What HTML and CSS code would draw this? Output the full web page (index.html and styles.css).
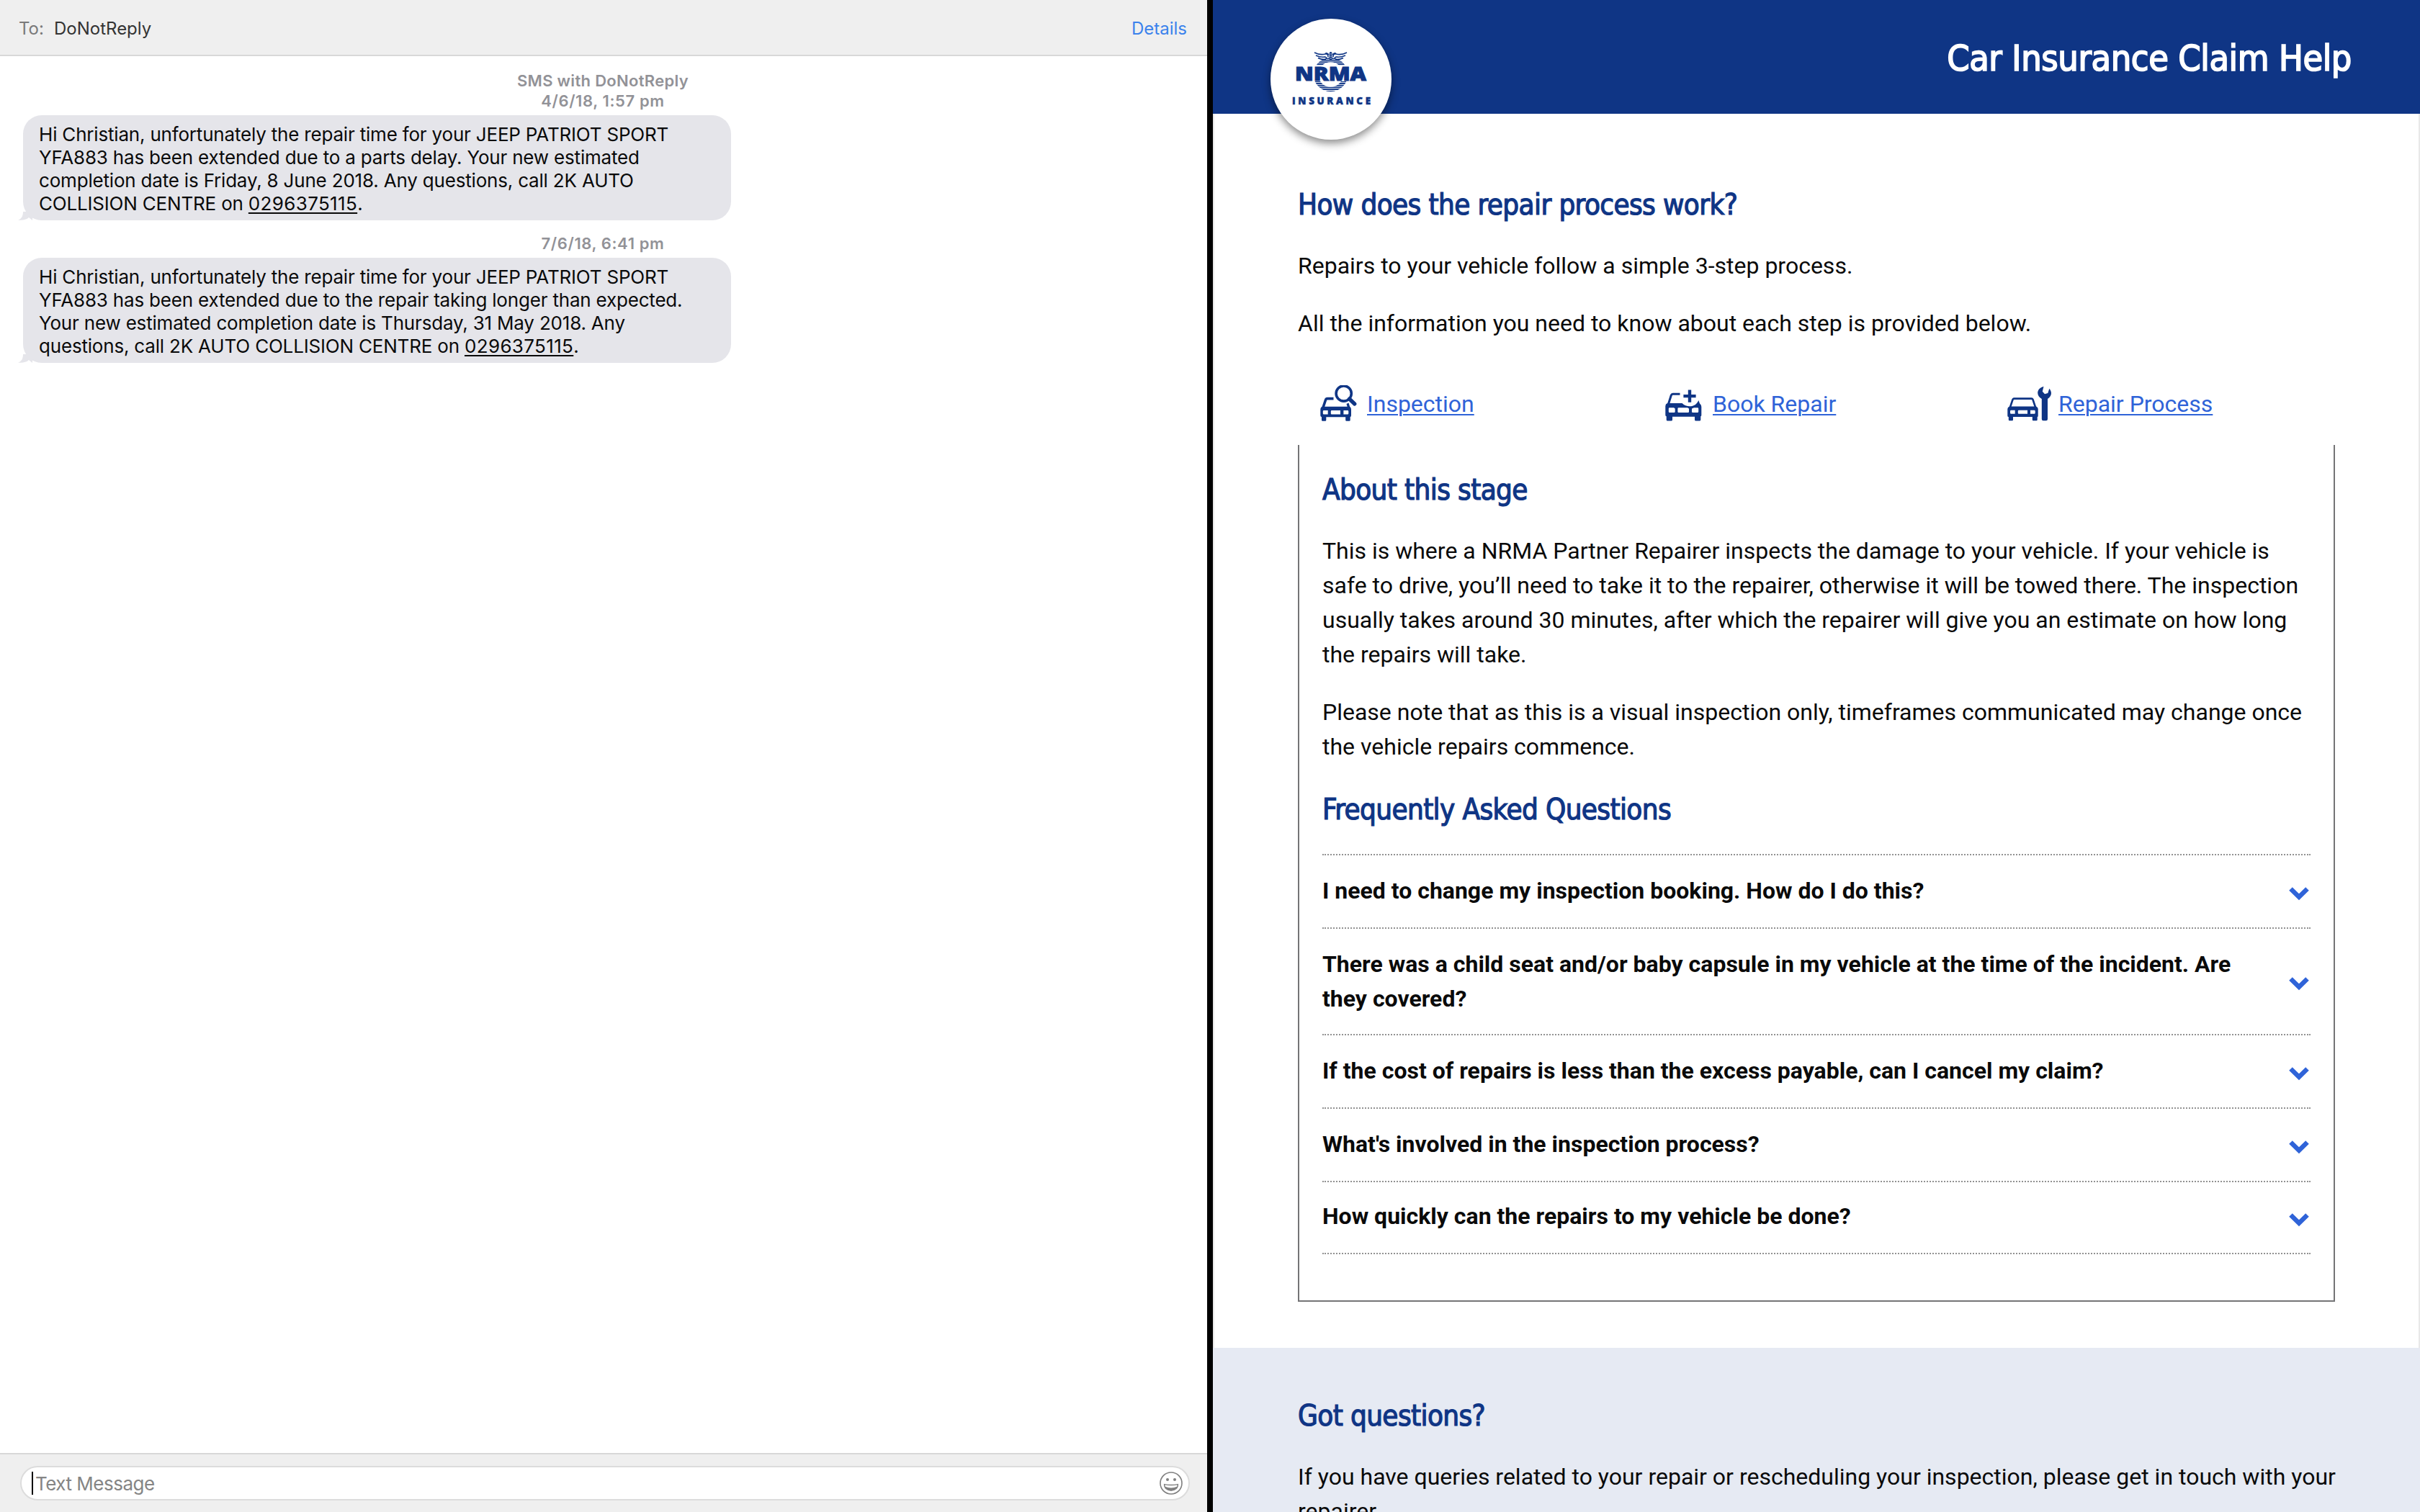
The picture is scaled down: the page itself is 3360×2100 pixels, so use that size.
FILE: index.html
```
<!DOCTYPE html>
<html lang="en">
<head>
<meta charset="utf-8">
<title>Car Insurance Claim Help</title>
<link rel="stylesheet" href="styles.css">
</head>
<body>
<div class="screen">
  <section class="messages">
    <header class="messages-header">
      <span class="to-label">To:</span>
      <span class="recipient">DoNotReply</span>
      <a class="details">Details</a>
    </header>
    <div class="thread">
      <div class="stamp first">SMS with DoNotReply<br><span class="time">4/6/18, 1:57 pm</span></div>
      <div class="bubble">Hi Christian, unfortunately the repair time for your JEEP PATRIOT SPORT<br>YFA883 has been extended due to a parts delay. Your new estimated<br>completion date is Friday, 8 June 2018. Any questions, call 2K AUTO<br>COLLISION CENTRE on <u>0296375115</u>.
        <svg class="tail" width="20" height="12" viewBox="0 0 20 12"><path d="M7 0C7 6 5 10 0 11.6C6 12.4 12 11 15 8L20 12V0Z"/></svg>
      </div>
      <div class="stamp second"><span class="time">7/6/18, 6:41 pm</span></div>
      <div class="bubble">Hi Christian, unfortunately the repair time for your JEEP PATRIOT SPORT<br>YFA883 has been extended due to the repair taking longer than expected.<br>Your new estimated completion date is Thursday, 31 May 2018. Any<br>questions, call 2K AUTO COLLISION CENTRE on <u>0296375115</u>.
        <svg class="tail" width="20" height="12" viewBox="0 0 20 12"><path d="M7 0C7 6 5 10 0 11.6C6 12.4 12 11 15 8L20 12V0Z"/></svg>
      </div>
    </div>
    <footer class="composer">
      <div class="field">
        <span class="caret"></span>
        <span class="placeholder">Text Message</span>
        <svg class="emoji" width="32" height="32" viewBox="0 0 32 32">
          <circle cx="16" cy="16" r="15" fill="none" stroke="#7f7f7f" stroke-width="1.6"/>
          <circle cx="11" cy="11" r="2" fill="#7f7f7f"/><circle cx="21" cy="11" r="2" fill="#7f7f7f"/>
          <path d="M6.6 17.6Q16 19.4 25.4 17.6C25.6 23 21.5 26 16 26S6.4 23 6.6 17.6Z" fill="none" stroke="#7f7f7f" stroke-width="1.4"/>
          <path d="M7.4 20.5Q16 24.4 24.6 20.5Q22.6 26.4 16 26.4T7.4 20.5Z" fill="#7f7f7f"/>
        </svg>
      </div>
    </footer>
  </section>

  <main class="site">
    <header class="site-header">
      <h1>Car Insurance Claim Help</h1>
      <div class="logo">
        <svg width="168" height="168" viewBox="0 0 168 168">
          <defs>
            <pattern id="stripes" width="4" height="2.7" patternUnits="userSpaceOnUse"><rect width="4" height="1.8" fill="#0f3585"/></pattern>
          </defs>
          <circle cx="83.5" cy="77.5" r="20.5" fill="none" stroke="url(#stripes)" stroke-width="6.5"/>
          <path d="M60 44H107V58L99 59Q91 54 83.500 54T68 59L60 58Z" fill="#fff"/>
          <g fill="none" stroke="#0f3585" stroke-width="1.7">
            <path d="M61 47Q69 51 76 49Q80 48 80 53M63 51Q70 54 75 53Q78 53 78 56M66 54.500Q71 57 77 56.500M76 49Q78 46.500 81 50"/>
            <path d="M106 47Q98 51 91 49Q87 48 87 53M104 51Q97 54 92 53Q89 53 89 56M101 54.500Q96 57 90 56.500M91 49Q89 46.500 86 50"/>
          </g>
          <rect x="81.700" y="46" width="3.800" height="12" rx="1.900" fill="#0f3585"/>
          <path d="M82.500 49H85M82.500 52H85M82.500 55H85" stroke="#fff" stroke-width=".7"/>
          <rect x="33" y="65" width="102" height="22" fill="#fff"/>
          <text class="logo-name" x="34" y="85.600" textLength="99" lengthAdjust="spacingAndGlyphs">NRMA</text>
          <text class="logo-sub" x="30" y="119.300" textLength="109" lengthAdjust="spacing">INSURANCE</text>
        </svg>
      </div>
    </header>

    <div class="content">
      <h2>How does the repair process work?</h2>
      <p>Repairs to your vehicle follow a simple 3-step process.</p>
      <p>All the information you need to know about each step is provided below.</p>

      <nav class="steps">
        <div class="step">
          <span class="icon"><svg width="51" height="50" viewBox="0 0 51 50">
            <circle cx="32.700" cy="11.500" r="10.600" fill="none" stroke="#0f3585" stroke-width="3.600"/>
            <path d="M40.500 19L47.800 26" stroke="#0f3585" stroke-width="5.200" stroke-linecap="round"/>
            <path d="M4 31L7.500 20.500Q8.200 18.600 10 18.600H18.500" fill="none" stroke="#0f3585" stroke-width="3.600"/>
            <path d="M36.500 26L39.500 24.500L41.500 31H38Z" fill="#0f3585"/>
            <path fill-rule="evenodd" fill="#0f3585" d="M3 29.700H40.500Q43 30.500 43 34V42Q43 44 41.700 44V48.500Q41.700 49.800 40.400 49.800H36.500Q35.200 49.800 35.200 48.500V44.300H8.300V48.500Q8.300 49.800 7 49.800H3.200Q2 49.800 2 48.500V44Q.3 44 .3 42V34Q.3 30.500 3 29.700ZM5 35A1.200 1.200 0 0 0 3.800 36.200V39.200A1.200 1.200 0 0 0 5 40.400H10.700V35ZM16 35Q14.800 35 14.800 36.200V39.200Q14.800 40.400 16 40.400H28V35ZM32.400 35V40.400H38Q39.300 40.400 39.300 39.200V36.200Q39.300 35 38 35Z"/>
          </svg></span>
          <a>Inspection</a>
        </div>
        <div class="step">
          <span class="icon"><svg width="51" height="44" viewBox="0 0 51 44">
            <path d="M34 .5V17.700M25.400 9.100H42.600" stroke="#0f3585" stroke-width="4.400"/>
            <path d="M4.500 20L8.300 8Q9 6.200 10.700 6.200H20.500" fill="none" stroke="#0f3585" stroke-width="3"/>
            <path fill-rule="evenodd" fill="#0f3585" d="M3 19H23.500Q28 23.300 34 23.300C40 23.300 44 20.500 46.300 15L48 19.500Q50.300 21 50.300 24V35.500Q50.300 37.300 49.300 37.300V42Q49.300 43.600 47.700 43.600H42.500Q41 43.600 41 42V37.700H10V42Q10 43.600 8.500 43.600H3.300Q1.700 43.600 1.700 42V37.300Q.3 37.300 .3 35.500V23Q.3 20 3 19ZM6 25.200Q4.800 25.200 4.800 26.400V30.700Q4.800 31.900 6 31.900H12.500Q13.700 31.900 13.700 30.700V26.400L12 25.200ZM18.600 25.200Q17.400 25.200 17.400 26.400V30.700Q17.400 31.900 18.600 31.900H31.800Q33 31.900 33 30.700V26.400L31 25.200ZM40 25.200L37 26.400V30.700Q37 31.900 38.200 31.900H45Q46.200 31.900 46.200 30.700V26.400Q46.200 25.200 45 25.200Z"/>
          </svg></span>
          <a>Book Repair</a>
        </div>
        <div class="step">
          <span class="icon"><svg width="62" height="49" viewBox="0 0 62 49">
            <path d="M3.800 30L7.500 19Q8 17.600 9.500 17.600H33.500Q35 17.600 35.500 19L39.200 30" fill="none" stroke="#0f3585" stroke-width="2.600"/>
            <path fill-rule="evenodd" fill="#0f3585" d="M3 28.500H40Q42.700 29.500 42.700 32V41.500Q42.700 43 41.700 43V47Q41.700 48.200 40.500 48.200H36Q34.800 48.200 34.800 47V43H8V47Q8 48.200 6.800 48.200H3Q1.800 48.200 1.800 47V43Q.3 43 .3 41.500V32Q.3 29.500 3 28.500ZM5.300 33.700Q4 33.700 4 34.900V37.600Q4 38.800 5.300 38.800H10.700V33.700ZM16 33.700Q14.800 33.700 14.800 34.900V37.600Q14.800 38.800 16 38.800H28V33.700ZM32 33.700V38.800H37.500Q38.700 38.800 38.700 37.600V34.900Q38.700 33.700 37.500 33.700Z"/>
            <path fill="#0f3585" d="M50.500 .8L48.800 7.700L52 11.200L56.300 10L58.300 3.700C62.500 8.500 61.800 14 56 18V46Q56 48.200 53.800 48.200H50Q47.800 48.200 47.800 46V18C39.500 13.500 40.500 3.500 50.500 .8Z"/>
          </svg></span>
          <a>Repair Process</a>
        </div>
      </nav>

      <section class="stage">
        <h2>About this stage</h2>
        <p>This is where a NRMA Partner Repairer inspects the damage to your vehicle. If your vehicle is<br>safe to drive, you’ll need to take it to the repairer, otherwise it will be towed there. The inspection<br>usually takes around 30 minutes, after which the repairer will give you an estimate on how long<br>the repairs will take.</p>
        <p>Please note that as this is a visual inspection only, timeframes communicated may change once<br>the vehicle repairs commence.</p>
        <h2 class="faq-title">Frequently Asked Questions</h2>
        <ul class="faq">
          <li><span>I need to change my inspection booking. How do I do this?</span><svg class="chevron" width="30" height="20" viewBox="0 0 30 20"><path d="M3.500 3.500L15 14.800L26.500 3.500"/></svg></li>
          <li><span>There was a child seat and/or baby capsule in my vehicle at the time of the incident. Are<br>they covered?</span><svg class="chevron" width="30" height="20" viewBox="0 0 30 20"><path d="M3.500 3.500L15 14.800L26.500 3.500"/></svg></li>
          <li><span>If the cost of repairs is less than the excess payable, can I cancel my claim?</span><svg class="chevron" width="30" height="20" viewBox="0 0 30 20"><path d="M3.500 3.500L15 14.800L26.500 3.500"/></svg></li>
          <li><span>What's involved in the inspection process?</span><svg class="chevron" width="30" height="20" viewBox="0 0 30 20"><path d="M3.500 3.500L15 14.800L26.500 3.500"/></svg></li>
          <li><span>How quickly can the repairs to my vehicle be done?</span><svg class="chevron" width="30" height="20" viewBox="0 0 30 20"><path d="M3.500 3.500L15 14.800L26.500 3.500"/></svg></li>
        </ul>
      </section>
    </div>

    <section class="questions">
      <h2>Got questions?</h2>
      <p>If you have queries related to your repair or rescheduling your inspection, please get in touch with your<br>repairer.</p>
    </section>
  </main>
</div>
</body>
</html>
```
FILE: styles.css
```
* { box-sizing: border-box; }
body { margin: 0; overflow: hidden; }
h1, h2, p, ul { margin: 0; padding: 0; font-weight: 400; }
svg { display: block; }

.screen {
  display: grid;
  grid-template-columns: 1676px 1676px;
  column-gap: 8px;
  height: 2100px;
  background: #000;
  overflow: hidden;
}

/* Messages window */
.messages {
  display: flex;
  flex-direction: column;
  height: 2100px;
  background: #fff;
  font-family: Inter, "Liberation Sans", sans-serif;
}
.messages-header {
  display: flex;
  align-items: center;
  height: 78px;
  padding: 3px 28px 0 26px;
  background: #efefef;
  border-bottom: 2px solid #d8d8d8;
  font-size: 24px;
  line-height: 30px;
  color: #333;
}
.to-label { width: 49px; color: #7a7a7a; }
.recipient { flex: 1; }
.details { color: #3b82ec; }
.thread { flex: 1; padding: 20px 0 0 32px; }
.stamp {
  width: 1610px;
  text-align: center;
  font-size: 22px;
  font-weight: 600;
  letter-spacing: 0.3px;
  line-height: 28px;
  color: #929297;
}
.time { letter-spacing: 0.6px; }
.stamp.first { margin-bottom: 6px; }
.stamp.second { margin: 18px 0 6px; }
.bubble {
  position: relative;
  width: 983px;
  height: 146px;
  padding: 11px 20px 0 22px;
  border-radius: 26px;
  background: #e5e5ea;
  font-size: 26px;
  line-height: 32px;
  letter-spacing: -0.19px;
  white-space: nowrap;
  color: #0a0a0a;
}
.bubble u {
  letter-spacing: 0.35px;
  text-decoration-thickness: 2px;
  text-underline-offset: 3px;
  text-decoration-skip-ink: none;
}
.tail { position: absolute; left: -7px; bottom: 0; fill: #e5e5ea; }
.composer {
  height: 82px;
  padding: 16px 24px 0 28px;
  background: #efefef;
  border-top: 2px solid #d8d8d8;
}
.field {
  display: flex;
  align-items: center;
  height: 48px;
  padding: 0 8px 0 14px;
  border: 2px solid #dcdcdc;
  border-radius: 24px;
  background: #fff;
}
.caret { width: 2px; height: 32px; background: #000; }
.placeholder {
  flex: 1;
  margin-left: 3px;
  padding-top: 2px;
  font-size: 26px;
  letter-spacing: -0.5px;
  line-height: 32px;
  color: #858585;
}

/* Insurance help page */
.site {
  height: 2100px;
  overflow: hidden;
  background: #fff;
  font-family: Roboto, "Liberation Sans", sans-serif;
  font-size: 32px;
  line-height: 48px;
  color: #0a0a0a;
  white-space: nowrap;
}
.site-header {
  position: relative;
  display: flex;
  justify-content: flex-end;
  align-items: center;
  height: 158px;
  padding: 3px 95px 0 0;
  background: #0f3585;
}
h1, h2 { font-family: "DejaVu Sans Condensed", "DejaVu Sans", sans-serif; font-stretch: condensed; }
h1 {
  font-size: 50px;
  line-height: 60px;
  letter-spacing: -0.4px;
  color: #fff;
  -webkit-text-stroke: 1.7px #fff;
}
h2 {
  font-size: 40px;
  line-height: 48px;
  letter-spacing: -0.62px;
  color: #0f3585;
  -webkit-text-stroke: 1.2px #0f3585;
}
.logo {
  position: absolute;
  left: 80px;
  top: 26px;
  width: 168px;
  height: 168px;
  border-radius: 50%;
  background: #fff;
  box-shadow: 0 5px 12px rgba(0, 0, 0, 0.45);
}
.logo-name { font: 800 27px "Open Sans", sans-serif; fill: #0f3585; stroke: #0f3585; stroke-width: 1px; }
.logo-sub { font: 800 13.4px "Open Sans", sans-serif; fill: #0f3585; stroke: #0f3585; stroke-width: 0.5px; }

.content {
  height: 1714px;
  padding: 102px 116px 0;
  border: solid #e8e8e8;
  border-width: 0 2px;
}
h2 + p { margin-top: 37px; }
p + p { margin-top: 32px; }
.steps {
  display: grid;
  grid-template-columns: repeat(3, 480px);
  margin-top: 64px;
}
.step { display: grid; grid-template-columns: 96px auto; height: 48px; }
.step a { color: #2f63d8; text-decoration: underline; text-decoration-thickness: 2px; text-underline-offset: 3px; }
.icon { display: flex; align-items: flex-end; height: 48px; padding-left: 31px; }
.step:nth-child(2) .icon { padding-left: 30px; }
.step:nth-child(3) .icon { padding-left: 25px; }
.stage {
  width: 1440px;
  height: 1190px;
  margin-top: 33px;
  padding: 38px 32px 0;
  border: solid #747476;
  border-width: 0 2px 2px;
}
.faq-title { margin-top: 39px; }
.faq { margin-top: 38px; list-style: none; border-top: 2px dotted #929292; }
.faq li {
  display: flex;
  justify-content: space-between;
  align-items: center;
  min-height: 102px;
  border-bottom: 2px dotted #929292;
  padding: 25px 0;
  font-weight: 700;
}
.faq li:last-child { min-height: 100px; padding: 23px 0; }
.faq span { align-self: flex-start; }
.chevron { margin: 5px 1px 0 0; fill: none; stroke: #2f63d8; stroke-width: 6.5; }
.questions { height: 228px; padding: 70px 116px 0 118px; background: #e6eaf3; }
```
